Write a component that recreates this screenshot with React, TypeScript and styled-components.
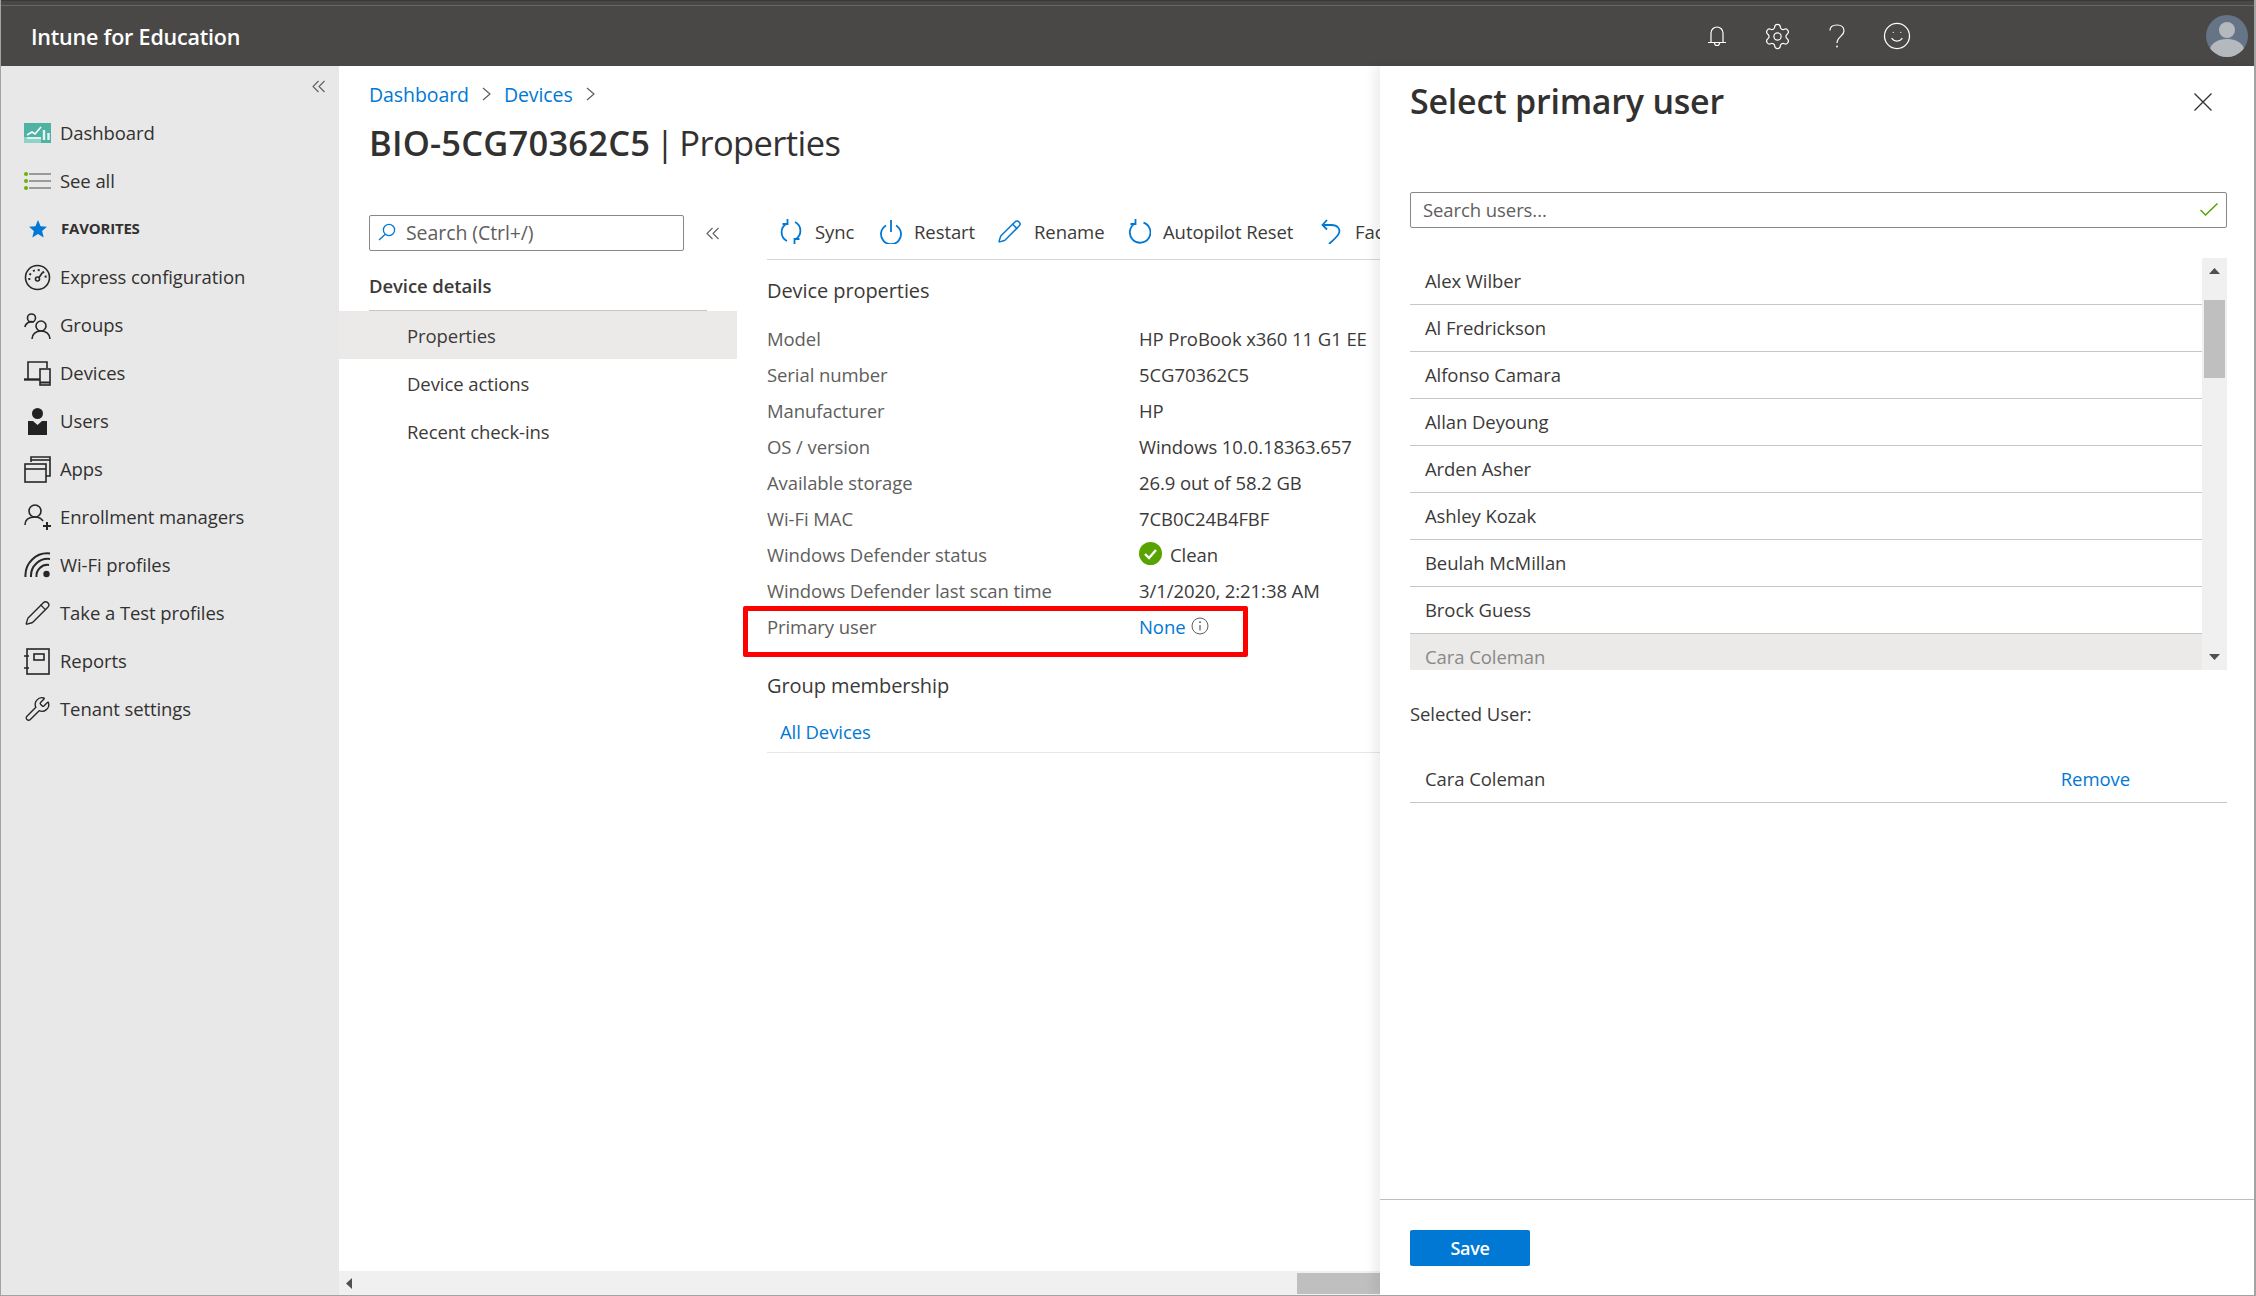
import React, { FC, ReactNode } from 'react';
import styled, { createGlobalStyle } from 'styled-components';
import { Pencil, Settings, Smile, Wrench } from 'lucide-react';

const GlobalStyle = createGlobalStyle`
  html, body {
    margin: 0;
    padding: 0;
    background: #fff;
    overflow: hidden;
  }
  * {
    box-sizing: border-box;
  }
`;

const Page = styled.div`
  width: 2256px;
  height: 1296px;
  display: flex;
  flex-direction: column;
  overflow: hidden;
  border-left: 1px solid #a3a3a3;
  border-right: 2px solid #a3a3a3;
  border-bottom: 1px solid #a3a3a3;
  font-family: 'Open Sans', 'Liberation Sans', sans-serif;
  font-size: 18.5px;
  letter-spacing: -0.08px;
  color: #323130;
`;

const TopBar = styled.header`
  height: 66px;
  flex: none;
  display: flex;
  align-items: center;
  padding-top: 5px;
  background: #494846;
  border-top: 1px solid #3a3a3a;
  box-shadow: inset 0 4px 0 #494846, inset 0 5px 0 #666;
  color: #fff;
`;

const Brand = styled.div`
  margin-left: 30px;
  font-size: 21.5px;
  font-weight: 600;
  letter-spacing: -0.2px;
  flex: 1;
`;

const TopIcon = styled.div<{ $w: number }>`
  width: ${(p) => p.$w}px;
  display: flex;
  justify-content: flex-start;
`;

const Avatar = styled.div`
  width: 42px;
  height: 42px;
  margin: 0 6px 0 0;
  border-radius: 50%;
  overflow: hidden;
`;

const Body = styled.div`
  flex: 1;
  min-height: 0;
  display: flex;
`;

const Sidebar = styled.nav`
  width: 338px;
  flex: none;
  background: #e8e8e8;
  display: flex;
  flex-direction: column;
`;

const CollapseRow = styled.div`
  height: 43px;
  display: flex;
  align-items: center;
  justify-content: flex-end;
  padding: 0 14px 2px 0;
`;

const NavRow = styled.div`
  height: 48px;
  display: flex;
  align-items: center;
  padding: 0 0 2px 23px;
  gap: 9px;
`;

const NavIcon = styled.span`
  width: 27px;
  height: 27px;
  flex: none;
  display: flex;
  align-items: center;
  justify-content: center;
  margin-top: 2px;
  color: #262626;
`;

const FavLabel = styled.span`
  font-size: 15px;
  font-weight: 700;
  letter-spacing: -0.2px;
  margin: 2px 0 2px 1px;
`;

const Main = styled.main`
  flex: 1;
  min-width: 0;
  display: flex;
  flex-direction: column;
  overflow: hidden;
  background: #fff;
`;

const MainContent = styled.div`
  flex: 1;
  min-height: 0;
`;

const Breadcrumb = styled.div`
  height: 24px;
  margin: 16px 0 0 30px;
  display: flex;
  align-items: center;
  gap: 13px;
  color: #0078d4;
  font-size: 19.5px;
`;

const PageTitle = styled.h1`
  height: 44px;
  margin: 15px 0 0 30px;
  font-size: 34.5px;
  line-height: 44px;
  font-weight: 400;
  letter-spacing: -0.6px;
  word-spacing: -3px;
  white-space: nowrap;
  color: #323130;
  b {
    font-weight: 600;
    letter-spacing: 0.2px;
  }
`;

const Split = styled.div`
  display: flex;
  margin-top: 50px;
`;

const Menu = styled.div`
  width: 398px;
  flex: none;
`;

const MenuSearchRow = styled.div`
  display: flex;
  align-items: center;
  padding-left: 30px;
  gap: 22px;
`;

const SearchBox = styled.div`
  width: 315px;
  height: 36px;
  border: 1px solid #8a8886;
  border-radius: 2px;
  display: flex;
  align-items: center;
  padding: 0 0 2px 8px;
  gap: 10px;
  font-size: 19.5px;
  color: #605e5c;
`;

const MenuHeading = styled.div`
  height: 48px;
  margin: 12px 30px 0;
  padding-bottom: 2px;
  border-bottom: 1px solid #c8c6c4;
  display: flex;
  align-items: center;
  font-weight: 600;
  font-size: 18.5px;
  color: #3b3a39;
`;

const MenuItem = styled.div<{ $active?: boolean }>`
  height: 48px;
  display: flex;
  align-items: center;
  padding-left: 68px;
  color: #3b3a39;
  background: ${(p) => (p.$active ? '#ebeae9' : 'transparent')};
`;

const Details = styled.div`
  flex: none;
  width: 613px;
  margin-left: 30px;
`;

const Toolbar = styled.div`
  height: 45px;
  display: flex;
  align-items: flex-start;
  padding: 0 0 0 12px;
  border-bottom: 1px solid #d6d6d6;
  white-space: nowrap;
`;

const ToolItem = styled.div<{ $w: number }>`
  width: ${(p) => p.$w}px;
  flex: none;
  height: 32px;
  display: flex;
  align-items: center;
  gap: 12px;
  color: #3b3a39;
`;

const SectionHeading = styled.div`
  height: 36px;
  display: flex;
  align-items: center;
  font-size: 20px;
  color: #3b3a39;
`;

const DevicePropsHeading = styled(SectionHeading)`
  margin-top: 12px;
`;

const PropList = styled.div`
  margin-top: 13px;
`;

const PropRow = styled.div`
  position: relative;
  height: 36px;
  padding-bottom: 2px;
  display: grid;
  grid-template-columns: 372px 1fr;
  align-items: center;
  white-space: nowrap;
`;

const PropLabel = styled.span`
  color: #605e5c;
`;

const PropValue = styled.span<{ $link?: boolean }>`
  display: flex;
  align-items: center;
  gap: 6px;
  color: ${(p) => (p.$link ? '#0078d4' : '#3b3a39')};
`;

const StatusBadge = styled.span`
  display: flex;
  margin: -1px 2px 0 0;
`;

const RedBox = styled.div`
  position: absolute;
  left: -24px;
  top: -3px;
  width: 505px;
  height: 51px;
  border: 5px solid #ff0000;
  border-radius: 2px;
  pointer-events: none;
`;

const GroupHeading = styled(SectionHeading)`
  margin-top: 23px;
  padding-bottom: 2px;
`;

const GroupItem = styled.div`
  height: 49px;
  padding: 6px 0 0 13px;
  display: flex;
  align-items: center;
  color: #0078d4;
  border-bottom: 1px solid #e6e6e6;
`;

const HScroll = styled.div`
  height: 24px;
  flex: none;
  background: #f0f0f0;
  display: flex;
  align-items: center;
  padding: 0 0 0 7px;
`;

const HThumb = styled.div`
  width: 90px;
  height: 21px;
  margin-left: 944px;
  background: #bfbfbf;
`;

const Panel = styled.aside`
  width: 874px;
  flex: none;
  display: flex;
  flex-direction: column;
  background: #fff;
  box-shadow: -6px 0 10px rgba(0, 0, 0, 0.07);
  z-index: 1;
`;

const PanelBody = styled.div`
  flex: 1;
  min-height: 0;
  padding: 0 27px 0 30px;
`;

const PanelHeader = styled.div`
  height: 44px;
  margin-top: 14px;
  display: flex;
  align-items: center;
  justify-content: space-between;
  padding-right: 15px;
`;

const PanelTitle = styled.h2`
  margin: 0 0 2px;
  font-size: 34px;
  font-weight: 600;
  letter-spacing: -0.22px;
  color: #323130;
`;

const UserSearch = styled.div`
  height: 36px;
  margin-top: 68px;
  border: 1px solid #8a8886;
  border-radius: 2px;
  display: flex;
  align-items: center;
  justify-content: space-between;
  padding: 0 8px 2px 12px;
  color: #605e5c;
`;

const UserList = styled.div`
  height: 412px;
  margin-top: 30px;
  display: flex;
  overflow: hidden;
`;

const UserNames = styled.div`
  flex: 1;
  min-width: 0;
`;

const UserRow = styled.div<{ $selected?: boolean }>`
  height: 47px;
  padding: 0 0 2px 15px;
  display: flex;
  align-items: center;
  border-bottom: 1px solid #c8c6c4;
  background: ${(p) => (p.$selected ? '#ebeae9' : '#fff')};
  color: ${(p) => (p.$selected ? '#8a8886' : '#3b3a39')};
`;

const VScroll = styled.div`
  width: 25px;
  flex: none;
  background: #f0f0f0;
  display: flex;
  flex-direction: column;
  align-items: center;
  padding-top: 10px;
`;

const VThumb = styled.div`
  width: 21px;
  height: 78px;
  margin-top: 26px;
  background: #bfbfbf;
`;

const ArrowDown = styled.div`
  margin-top: auto;
  margin-bottom: 10px;
  display: flex;
`;

const SelectedLabel = styled.div`
  height: 36px;
  margin-top: 26px;
  padding-bottom: 2px;
  display: flex;
  align-items: center;
  color: #3b3a39;
`;

const SelectedRow = styled.div`
  height: 47px;
  margin-top: 24px;
  padding: 0 97px 2px 15px;
  display: flex;
  align-items: center;
  justify-content: space-between;
  border-bottom: 1px solid #c8c6c4;
  color: #3b3a39;
`;

const RemoveLink = styled.span`
  color: #0078d4;
`;

const PanelFooter = styled.div`
  height: 96px;
  flex: none;
  border-top: 1px solid #bdbdbd;
  padding: 30px 0 0 30px;
`;

const SaveButton = styled.button`
  width: 120px;
  height: 36px;
  border: none;
  border-radius: 2px;
  background: #0078d4;
  color: #fff;
  font-family: inherit;
  font-size: 18px;
  font-weight: 600;
  letter-spacing: -0.3px;
`;

const Svg: FC<{ w: number; h: number; children: ReactNode }> = ({ w, h, children }) => (
  <svg width={w} height={h} viewBox={`0 0 ${w} ${h}`} fill='none' style={{ display: 'block', flex: 'none' }}>
    {children}
  </svg>
);

const line = { stroke: 'currentColor', strokeWidth: 1.6 };
const blue = { stroke: '#0078d4', strokeWidth: 1.8 };

const DoubleChevron: FC = () => (
  <Svg w={13} h={13}>
    <path d='M6.5 1 1 6.5 6.5 12M12.5 1 7 6.5 12.5 12' stroke='#605e5c' strokeWidth={1.1} />
  </Svg>
);

const Chevron: FC = () => (
  <Svg w={9} h={14}>
    <path d='M1 1l7 6-7 6' stroke='#605e5c' strokeWidth={1.2} />
  </Svg>
);

const navIcons: Record<string, ReactNode> = {
  dashboard: (
    <Svg w={27} h={20}>
      <rect width={27} height={20} fill='#4fb3a3' />
      <rect y={14} width={17} height={6} fill='#8fd2c7' />
      <path d='M3 12l5-3 3 2 6-7' stroke='#fff' strokeWidth={1.6} />
      <path d='M3 15h14' stroke='#fff' strokeWidth={1.4} />
      <path d='M20 7v10M24.5 10v7' stroke='#e8f5f3' strokeWidth={2.4} />
    </Svg>
  ),
  list: (
    <Svg w={27} h={18}>
      <path d='M5 2h22M5 9h22M5 16h22' stroke='#9a9a9a' strokeWidth={2} />
      <rect x={0} y={0} width={4} height={4} rx={2} fill='#6bb100' />
      <rect x={0} y={7} width={4} height={4} rx={2} fill='#6bb100' />
      <rect x={0} y={14} width={4} height={4} rx={2} fill='#6bb100' />
    </Svg>
  ),
  gauge: (
    <Svg w={27} h={27}>
      <circle cx={13.5} cy={13.5} r={12} {...line} />
      <path d='M5.5 16a8 8 0 0 1 8-10 8 8 0 0 1 8 10' stroke='currentColor' strokeWidth={2} strokeDasharray='2 3' />
      <circle cx={13.5} cy={15} r={2} {...line} />
      <path d='M15 13.5l3.5-5' {...line} />
    </Svg>
  ),
  groups: (
    <Svg w={27} h={27}>
      <circle cx={7.5} cy={6} r={4} {...line} />
      <path d='M.8 15a7 7 0 0 1 9-5' {...line} />
      <circle cx={17} cy={14} r={5} {...line} />
      <path d='M8 27c0-5 4-8 9-8s9 3 9 8' {...line} />
    </Svg>
  ),
  devices: (
    <Svg w={27} h={27}>
      <path d='M4 19V2h19v6' {...line} />
      <path d='M0 19.5h16' stroke='currentColor' strokeWidth={2.4} />
      <rect x={16} y={9} width={10} height={16} {...line} />
      <path d='M16 22.5h10' stroke='currentColor' strokeWidth={2} />
    </Svg>
  ),
  users: (
    <Svg w={19} h={27}>
      <circle cx={9.5} cy={5.5} r={5.5} fill='#222' />
      <path d='M0 13h5l4.5 4 4.5-4h5v14H0z' fill='#222' />
    </Svg>
  ),
  apps: (
    <Svg w={27} h={27}>
      <path d='M7 6V1h19v19h-4' {...line} />
      <path d='M7 4h19' {...line} />
      <rect x={1} y={8} width={21} height={18} {...line} />
      <path d='M1 13h21' {...line} />
    </Svg>
  ),
  enroll: (
    <Svg w={27} h={27}>
      <circle cx={11} cy={7} r={6} {...line} />
      <path d='M1 21c0-6 4-8 10-8 3 0 6 1 8 4' {...line} />
      <path d='M23 18v8M19 22h8' stroke='currentColor' strokeWidth={2} />
    </Svg>
  ),
  wifi: (
    <Svg w={27} h={27}>
      <path d='M1.5 25A22 22 0 0 1 26 1.5M7 25A17 17 0 0 1 26 7' stroke='currentColor' strokeWidth={2} />
      <path d='M12.5 25A11 11 0 0 1 25 13' stroke='currentColor' strokeWidth={2} />
      <circle cx={22.5} cy={22} r={3.2} fill='currentColor' />
    </Svg>
  ),
  pencil: <Pencil size={28} strokeWidth={1.2} />,
  reports: (
    <Svg w={27} h={27}>
      <rect x={3} y={1} width={22} height={25} {...line} />
      <rect x={10} y={6} width={10} height={6} {...line} />
      <path d='M0 8h5M0 20h5' {...line} />
    </Svg>
  ),
  wrench: <Wrench size={28} strokeWidth={1.2} />,
};

const navItems = [
  { key: 'gauge', label: 'Express configuration' },
  { key: 'groups', label: 'Groups' },
  { key: 'devices', label: 'Devices' },
  { key: 'users', label: 'Users' },
  { key: 'apps', label: 'Apps' },
  { key: 'enroll', label: 'Enrollment managers' },
  { key: 'wifi', label: 'Wi-Fi profiles' },
  { key: 'pencil', label: 'Take a Test profiles' },
  { key: 'reports', label: 'Reports' },
  { key: 'wrench', label: 'Tenant settings' },
];

const properties = [
  ['Model', 'HP ProBook x360 11 G1 EE'],
  ['Serial number', '5CG70362C5'],
  ['Manufacturer', 'HP'],
  ['OS / version', 'Windows 10.0.18363.657'],
  ['Available storage', '26.9 out of 58.2 GB'],
  ['Wi-Fi MAC', '7CB0C24B4FBF'],
];

const users = [
  'Alex Wilber',
  'Al Fredrickson',
  'Alfonso Camara',
  'Allan Deyoung',
  'Arden Asher',
  'Ashley Kozak',
  'Beulah McMillan',
  'Brock Guess',
];

const tools: { label: string; w: number; icon: ReactNode }[] = [
  {
    label: 'Sync',
    w: 101,
    icon: (
      <Svg w={24} h={25}>
        <path d='M8 4.5A9.8 9.8 0 0 0 8 22M16 20.5A9.8 9.8 0 0 0 16 3' {...blue} />
        <path d='M8.5 0v5H3.5M15.5 25v-5H20.5' {...blue} />
      </Svg>
    ),
  },
  {
    label: 'Restart',
    w: 117,
    icon: (
      <Svg w={22} h={25}>
        <path d='M6 6.5a10 10 0 1 0 10 0' {...blue} />
        <path d='M11 1v12' {...blue} />
      </Svg>
    ),
  },
  {
    label: 'Rename',
    w: 130,
    icon: <Pencil size={25} strokeWidth={1.4} color='#0078d4' />,
  },
  {
    label: 'Autopilot Reset',
    w: 194,
    icon: (
      <Svg w={24} h={25}>
        <path d='M8 4.5a10.3 10.3 0 1 0 8.5-.8' {...blue} />
        <path d='M8.5 0v5H3.5' {...blue} />
      </Svg>
    ),
  },
  {
    label: 'Factory reset',
    w: 200,
    icon: (
      <Svg w={22} h={25}>
        <path d='M1.5 6h9c6 0 9 4 7.5 8S12 21 8 25' {...blue} />
        <path d='M6 1 1.5 6l4.5 4.5' {...blue} />
      </Svg>
    ),
  },
];

const App: FC = () => (
  <Page>
    <GlobalStyle />
    <TopBar>
      <Brand>Intune for Education</Brand>
      <TopIcon $w={55}>
        <Svg w={18} h={22}>
          <path d='M3 17V8a6 6 0 0 1 12 0v9M0 17.5h18M6.5 18a2.5 2.5 0 0 0 5 0' stroke='#fff' strokeWidth={1.2} />
        </Svg>
      </TopIcon>
      <TopIcon $w={66}>
        <Settings size={29} strokeWidth={1} color='#fff' />
      </TopIcon>
      <TopIcon $w={53}>
        <Svg w={16} h={24}>
          <path d='M1 6.5C1 3 4 1 8 1s7 2 7 6c0 5-7 6-7 12' stroke='#fff' strokeWidth={1.2} />
          <circle cx={8} cy={22.5} r={0.9} fill='#fff' />
        </Svg>
      </TopIcon>
      <TopIcon $w={324}>
        <Smile size={30} strokeWidth={1} color='#fff' />
      </TopIcon>
      <Avatar>
        <Svg w={42} h={42}>
          <rect width={42} height={42} fill='#667487' />
          <circle cx={21} cy={15} r={8} fill='#b4b9be' />
          <ellipse cx={21} cy={35} rx={17} ry={11} fill='#b4b9be' />
        </Svg>
      </Avatar>
    </TopBar>
    <Body>
      <Sidebar>
        <CollapseRow>
          <DoubleChevron />
        </CollapseRow>
        <NavRow>
          <NavIcon>{navIcons.dashboard}</NavIcon>
          Dashboard
        </NavRow>
        <NavRow>
          <NavIcon>{navIcons.list}</NavIcon>
          See all
        </NavRow>
        <NavRow>
          <NavIcon>
            <Svg w={18} h={18}>
              <path d='M9 0l2.6 6.2 6.4.5-4.9 4.2 1.6 6.6L9 14l-5.7 3.5 1.6-6.6L0 6.7l6.4-.5z' fill='#0078d4' />
            </Svg>
          </NavIcon>
          <FavLabel>FAVORITES</FavLabel>
        </NavRow>
        {navItems.map((item) => (
          <NavRow key={item.key}>
            <NavIcon>{navIcons[item.key]}</NavIcon>
            {item.label}
          </NavRow>
        ))}
      </Sidebar>
      <Main>
        <MainContent>
          <Breadcrumb>
            Dashboard <Chevron /> Devices <Chevron />
          </Breadcrumb>
          <PageTitle>
            <b>BIO-5CG70362C5</b> | Properties
          </PageTitle>
          <Split>
            <Menu>
              <MenuSearchRow>
                <SearchBox>
                  <Svg w={18} h={18}>
                    <circle cx={11} cy={7} r={5.6} {...blue} strokeWidth={1.3} />
                    <path d='M7 11.5 1 17' {...blue} strokeWidth={1.3} />
                  </Svg>
                  Search (Ctrl+/)
                </SearchBox>
                <DoubleChevron />
              </MenuSearchRow>
              <MenuHeading>Device details</MenuHeading>
              <MenuItem $active>Properties</MenuItem>
              <MenuItem>Device actions</MenuItem>
              <MenuItem>Recent check-ins</MenuItem>
            </Menu>
            <Details>
              <Toolbar>
                {tools.map((tool) => (
                  <ToolItem key={tool.label} $w={tool.w}>
                    {tool.icon}
                    {tool.label}
                  </ToolItem>
                ))}
              </Toolbar>
              <DevicePropsHeading>Device properties</DevicePropsHeading>
              <PropList>
                {properties.map(([label, value]) => (
                  <PropRow key={label}>
                    <PropLabel>{label}</PropLabel>
                    <PropValue>{value}</PropValue>
                  </PropRow>
                ))}
                <PropRow>
                  <PropLabel>Windows Defender status</PropLabel>
                  <PropValue>
                    <StatusBadge>
                      <Svg w={23} h={23}>
                        <circle cx={11.5} cy={11.5} r={11.5} fill='#57a300' />
                        <path d='M6 12l4 4 7-8' stroke='#fff' strokeWidth={2.4} />
                      </Svg>
                    </StatusBadge>
                    Clean
                  </PropValue>
                </PropRow>
                <PropRow>
                  <PropLabel>Windows Defender last scan time</PropLabel>
                  <PropValue>3/1/2020, 2:21:38 AM</PropValue>
                </PropRow>
                <PropRow>
                  <PropLabel>Primary user</PropLabel>
                  <PropValue $link>
                    None
                    <Svg w={18} h={18}>
                      <circle cx={9} cy={9} r={8} stroke='#605e5c' strokeWidth={1} />
                      <path d='M9 8v5.5' stroke='#605e5c' strokeWidth={1.2} />
                      <circle cx={9} cy={5.2} r={0.9} fill='#605e5c' />
                    </Svg>
                  </PropValue>
                  <RedBox />
                </PropRow>
              </PropList>
              <GroupHeading>Group membership</GroupHeading>
              <GroupItem>All Devices</GroupItem>
            </Details>
          </Split>
        </MainContent>
        <HScroll>
          <Svg w={7} h={11}>
            <path d='M6 0v11L0 5.5z' fill='#505050' />
          </Svg>
          <HThumb />
        </HScroll>
      </Main>
      <Panel>
        <PanelBody>
          <PanelHeader>
            <PanelTitle>Select primary user</PanelTitle>
            <Svg w={18} h={18}>
              <path d='M.5.5l17 17M17.5.5l-17 17' stroke='#323130' strokeWidth={1.3} />
            </Svg>
          </PanelHeader>
          <UserSearch>
            Search users...
            <Svg w={18} h={13}>
              <path d='M.5 7l5 5L17.5.5' stroke='#57a300' strokeWidth={1.5} />
            </Svg>
          </UserSearch>
          <UserList>
            <UserNames>
              {users.map((name) => (
                <UserRow key={name}>{name}</UserRow>
              ))}
              <UserRow $selected>Cara Coleman</UserRow>
            </UserNames>
            <VScroll>
              <Svg w={11} h={6}>
                <path d='M5.5 0 11 6H0z' fill='#505050' />
              </Svg>
              <VThumb />
              <ArrowDown>
                <Svg w={11} h={6}>
                  <path d='M5.5 6 11 0H0z' fill='#505050' />
                </Svg>
              </ArrowDown>
            </VScroll>
          </UserList>
          <SelectedLabel>Selected User:</SelectedLabel>
          <SelectedRow>
            Cara Coleman
            <RemoveLink>Remove</RemoveLink>
          </SelectedRow>
        </PanelBody>
        <PanelFooter>
          <SaveButton>Save</SaveButton>
        </PanelFooter>
      </Panel>
    </Body>
  </Page>
);

export default App;
